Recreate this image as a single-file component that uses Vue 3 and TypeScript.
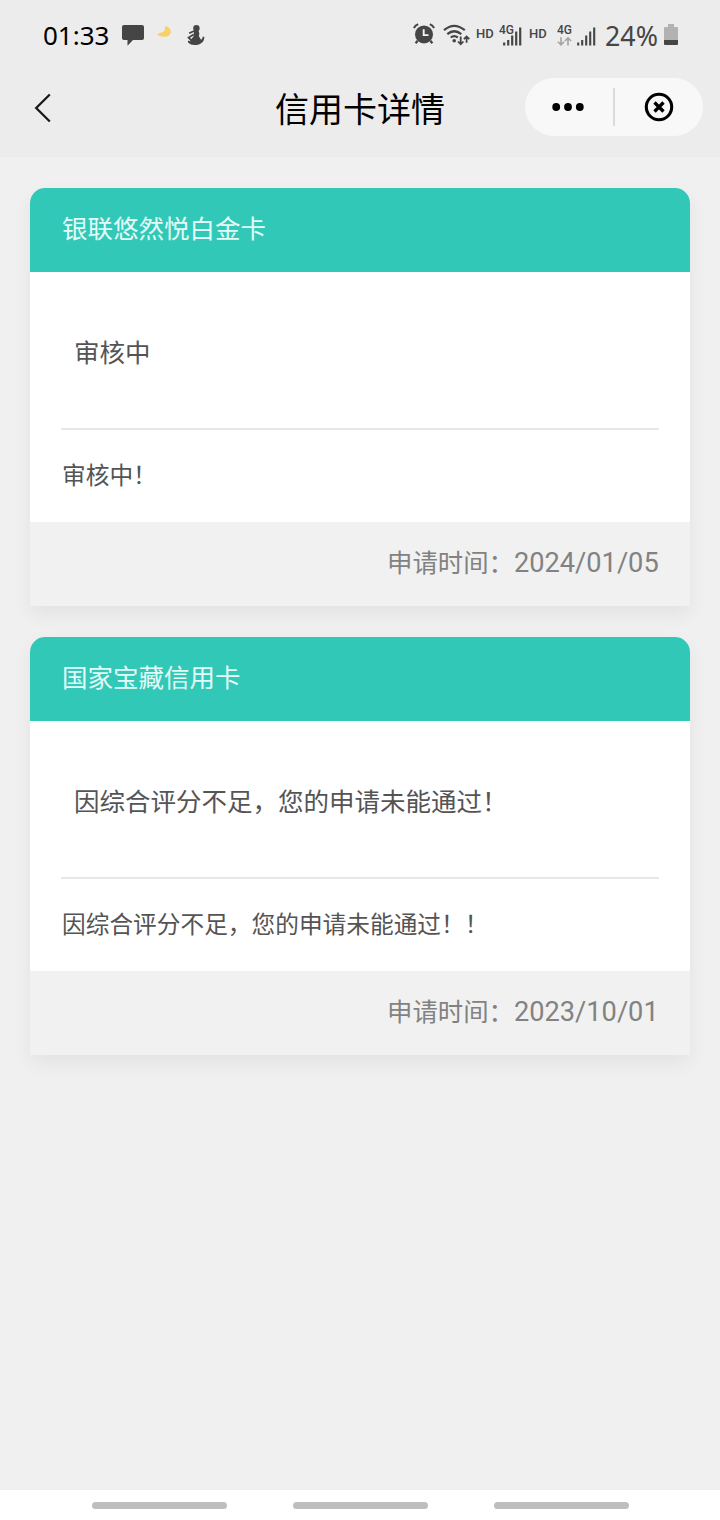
<script setup lang="ts">
interface Application {
  name: string
  status: string
  detail: string
  date: string
}

const applications: Application[] = [
  { name: '银联悠然悦白金卡', status: '审核中', detail: '审核中！', date: '2024/01/05' },
  {
    name: '国家宝藏信用卡',
    status: '因综合评分不足，您的申请未能通过！',
    detail: '因综合评分不足，您的申请未能通过！！',
    date: '2023/10/01',
  },
]
</script>

<template>
  <div class="screen">
    <header class="top">
      <div class="status-bar">
        <span class="clock">01:33</span>
        <svg class="bubble" width="22" height="21" viewBox="0 0 22 21">
          <path d="M2 0H20Q22 0 22 2V13Q22 15 20 15H11L5.5 20.7V15H2Q0 15 0 13V2Q0 0 2 0Z" fill="#454545" />
        </svg>
        <svg class="weather" width="16" height="14" viewBox="0 0 16 14">
          <path d="M7.6 1.2C10.5 0.8 13.8 3.2 13.8 6.8C13.8 10 11 12 7.5 11.7C4.5 11.8 1 11 0.6 9.2C2.5 7.4 4.5 8 6.3 6.8C8 5.5 8.3 3.5 7.6 1.2Z" fill="#f9cf68" />
        </svg>
        <svg class="figure" width="18" height="21" viewBox="0 0 18 21">
          <circle cx="9.4" cy="3.2" r="3.2" fill="#454545" />
          <path d="M7 5.5H11.4L12.4 8.5L11.8 11L13.6 14L14.5 16L10 19H4L3.5 15L6.5 11.5Z" fill="#454545" />
          <path d="M7 6L2.2 8.2M6.6 9.5L1.6 12.6L5 16" fill="none" stroke="#454545" stroke-width="1.8" />
          <path d="M1 15.5Q4 17 7.5 15L12 16Q15.5 15 15.8 11.6L17.4 12Q17 17.5 12.5 19.2Q5 21.5 1 17.5Z" fill="#454545" />
        </svg>

        <span class="spacer"></span>

        <svg class="alarm" width="22" height="22" viewBox="0 0 22 22">
          <circle cx="11" cy="11.4" r="9" fill="#454545" />
          <path d="M0.9 5.1Q2 2.4 5.2 1.1M16.8 1.1Q20 2.4 21.1 5.1" fill="none" stroke="#454545" stroke-width="2" />
          <path d="M4.7 17.7L2.6 20.3M17.3 17.7L19.4 20.3" stroke="#454545" stroke-width="2.2" />
          <path d="M10.7 6.3V12.1H15.5" fill="none" stroke="#f4f4f4" stroke-width="1.9" />
        </svg>
        <svg class="wifi" width="28" height="22" viewBox="0 0 28 22">
          <path d="M1 6.2Q11 -2.6 21.8 6.2M4.3 10.2Q11.2 4.3 18.3 10.2M7.7 13.5Q11.2 10.8 14.8 13.5" fill="none" stroke="#454545" stroke-width="2.2" />
          <circle cx="11.2" cy="16.8" r="1.8" fill="#454545" />
          <path d="M17.7 12.5V20.3M15 17.5L17.7 20.3L20.4 17.5M23.6 18.8V12.5M20.9 15.2L23.6 12.5L26.3 15.2" fill="none" stroke="#454545" stroke-width="1.8" />
        </svg>
        <span class="hd">HD</span>
        <span class="mobile">
          <span class="net">4G</span>
          <svg class="overlap-bars" width="19" height="19" viewBox="0 0 19 19">
            <path d="M1.2 15.5V18.5M5.2 13V18.5M9.2 8.5V18.5M13.2 4.5V18.5M17.2 0.5V18.5" stroke="#454545" stroke-width="2.2" />
          </svg>
        </span>
        <span class="hd second">HD</span>
        <span class="idle">
          <span class="net">4G</span>
          <svg class="arrows" width="15" height="9" viewBox="0 0 15 9">
            <path d="M4 0.3V7.7M0.9 4.7L4 7.8L7.1 4.7M11 8.4V1M7.9 4L11 0.9L14.1 4" fill="none" stroke="#a4a4a4" stroke-width="1.6" />
          </svg>
        </span>
        <svg class="bars" width="19" height="19" viewBox="0 0 19 19">
          <path d="M1.2 15.5V18.5M5.2 13V18.5M9.2 8.5V18.5M13.2 4.5V18.5M17.2 0.5V18.5" stroke="#454545" stroke-width="2.1" />
        </svg>
        <span class="percent">24%</span>
        <svg class="battery" width="14" height="21" viewBox="0 0 14 21">
          <path d="M4 0H10V3H13Q14 3 14 4V16H0V4Q0 3 1 3H4Z" fill="#b2b2b2" />
          <path d="M0 16H14V20Q14 21 13 21H1Q0 21 0 20Z" fill="#454545" />
        </svg>
      </div>

      <nav class="nav">
        <svg class="back" width="20" height="32" viewBox="0 0 20 32">
          <path d="M15.8 2.5L2.2 16L15.8 29.5" fill="none" stroke="#1a1a1a" stroke-width="2.3" />
        </svg>
        <h1 class="title">信用卡详情</h1>
        <div class="capsule">
          <svg class="more" width="32" height="10" viewBox="0 0 32 10">
            <circle cx="4.2" cy="5" r="3.9" />
            <circle cx="16" cy="5" r="3.9" />
            <circle cx="27.8" cy="5" r="3.9" />
          </svg>
          <i class="divider"></i>
          <svg class="close" width="30" height="30" viewBox="0 0 30 30">
            <circle cx="15" cy="15" r="12.7" fill="none" stroke="#000" stroke-width="3.1" />
            <path d="M10.5 10.5L19.5 19.5M19.5 10.5L10.5 19.5" stroke="#000" stroke-width="3.3" />
          </svg>
        </div>
      </nav>
    </header>

    <main class="list">
      <section v-for="item in applications" :key="item.name" class="card">
        <h2 class="card-head">{{ item.name }}</h2>
        <div class="card-body">
          <p class="result">{{ item.status }}</p>
          <p class="detail">{{ item.detail }}</p>
        </div>
        <footer class="card-foot">
          <span>申请时间：</span><span class="date">{{ item.date }}</span>
        </footer>
      </section>
    </main>

    <div class="gestures"><i></i><i></i><i></i></div>
  </div>
</template>

<style>
body {
  margin: 0;
}
</style>

<style scoped>
.screen {
  width: 720px;
  height: 1520px;
  display: flex;
  flex-direction: column;
  overflow: hidden;
  background: #f0f0f0;
  font-family: Roboto, "Noto Sans CJK SC", sans-serif;
}
.screen * {
  box-sizing: border-box;
}
svg {
  display: block;
  flex: none;
}
.top {
  height: 157px;
  flex: none;
  background: #ececec;
}
.status-bar {
  height: 70px;
  display: flex;
  align-items: center;
  padding: 0 42px 0 43px;
  color: #454545;
  white-space: nowrap;
}
.clock {
  width: 79px;
  font: 26px/36px "Noto Sans", sans-serif;
  color: #000;
}
.weather {
  margin: -7px 0 0 13px;
}
.figure {
  margin-left: 14px;
}
.spacer {
  flex: 1;
}
.alarm {
  margin: -2px 8px 0 0;
}
.wifi {
  margin-right: 5px;
}
.hd {
  width: 23px;
  font: 500 13px/16px Roboto, sans-serif;
  margin-top: -3px;
}
.hd.second {
  width: 28px;
  margin-left: 7px;
}
.net {
  display: block;
  font: 500 12px/12px Roboto, sans-serif;
}
.mobile {
  position: relative;
  width: 23px;
  height: 22px;
}
.overlap-bars {
  position: absolute;
  left: 4px;
  top: 3px;
}
.idle {
  width: 20px;
  height: 22px;
}
.arrows {
  margin-top: 1px;
}
.bars {
  margin-top: 2px;
}
.percent {
  width: 59px;
  margin: 1px 0 0 9px;
  font: 26.8px/36px "Noto Sans", sans-serif;
}
.battery {
  margin-top: -1px;
}
.nav {
  height: 87px;
  display: grid;
  grid-template-columns: 195px 330px 178px;
  align-items: start;
}
.back {
  margin: 22px 0 0 34px;
}
.title {
  margin: 15px 0 0;
  font-size: 34px;
  line-height: 50px;
  font-weight: 400;
  text-align: center;
  color: #000;
}
.capsule {
  height: 58px;
  margin-top: 8px;
  border-radius: 29px;
  background: #f8f8f8;
  display: flex;
  align-items: center;
}
.more {
  margin-left: 27px;
}
.divider {
  width: 2px;
  height: 38px;
  margin-left: 29px;
  background: #dadada;
}
.close {
  margin-left: 29px;
}
.list {
  flex: 1;
  padding: 31px 30px 0;
}
.card {
  height: 418px;
  margin-bottom: 31px;
  border-radius: 15px 15px 0 0;
  background: #fff;
  box-shadow: 0 8px 20px rgba(0, 0, 0, 0.06);
  display: flex;
  flex-direction: column;
}
.card-head {
  height: 84px;
  margin: 0;
  padding: 0 32px;
  border-radius: 15px 15px 0 0;
  background: #32c8b7;
  color: #e2fbf7;
  font-size: 25.5px;
  line-height: 82px;
  font-weight: 400;
}
.card-body {
  flex: 1;
  padding: 0 31px;
  color: #545454;
}
.result {
  height: 158px;
  margin: 0;
  padding-left: 13px;
  border-bottom: 2px solid #e7e7e7;
  font-size: 25.5px;
  line-height: 162px;
}
.detail {
  margin: 0;
  padding-left: 1px;
  font-size: 23.7px;
  line-height: 92px;
}
.card-foot {
  height: 84px;
  padding-right: 31px;
  background: #f1f1f1;
  color: #828282;
  display: flex;
  justify-content: flex-end;
  align-items: baseline;
  font-size: 25.4px;
  line-height: 82px;
}
.date {
  width: 145px;
  font-size: 27.2px;
}
.gestures {
  height: 30px;
  flex: none;
  background: #fff;
  display: flex;
  justify-content: center;
  align-items: center;
  gap: 66px;
}
.gestures i {
  width: 135px;
  height: 7px;
  border-radius: 4px;
  background: #bebebe;
}
</style>
